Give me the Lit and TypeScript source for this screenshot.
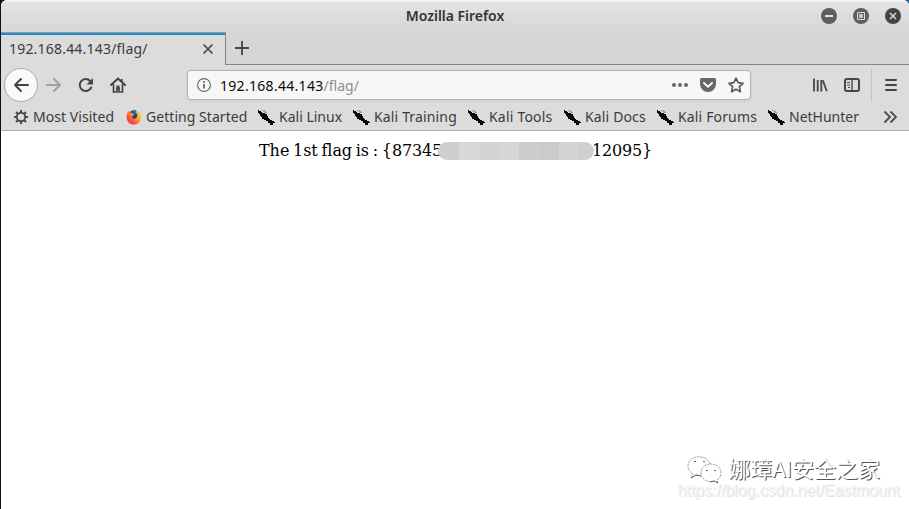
import { LitElement, html, css, svg } from "lit";
import { customElement } from "lit/decorators.js";

const kali = svg`<path d="M0 1H1V2H3V3H4V4H7V5H9V7H10V9H11V10H12V11H14V12H16V13H17V14H15V16H12V14H10V12H8V11H6V10H4V8H3V7H2V5H1V4H0Z" fill="#080808"/><path d="M4 1.2L8 4M6 1l3 3" stroke="#777" stroke-width=".7" fill="none"/>`;
const gear = svg`<g fill="none" stroke="#4a4a4a"><circle cx="8" cy="8" r="4.2" stroke-width="1.9"/><path d="M8 1v2.5M8 12.5V15M1 8h2.5M12.5 8H15M3 3l2 2M11 11l2 2M3 13l2-2M11 5l2-2" stroke-width="2"/></g>`;
const fox = svg`<defs><linearGradient id="f" x1="1" y1="0" x2="0" y2="1"><stop offset="0" stop-color="#fff044"/><stop offset=".35" stop-color="#ffb42a"/><stop offset=".65" stop-color="#ff5a2e"/><stop offset="1" stop-color="#ec1580"/></linearGradient></defs><circle cx="8" cy="7.6" r="6.3" fill="#143f94"/><path d="M7 1.2C9 0 11 2 11 4L8 5Z" fill="#1684dc"/><path d="M1.6 3.2 L2.5 1.8 L4 3.8 C5.5 3.3 6.2 3.6 6.6 4.3 L8.7 5.8 L6.4 6.9 C5.6 9.5 7.5 10.2 9 9.4 C11.8 9 11.9 5.8 10.2 3.8 L10.4 .9 C12 2 12.5 3.2 13 4.3 L13.7 3.4 C15.5 5.5 15.8 8 14.8 10.8 C12.8 16.6 5 17.4 1.8 12.4 C.1 9.5 .1 6 1.6 3.2Z" fill="url(#f)"/>`;

const bookmarks: [string, string][] = [
  ["Most Visited", "b0"], ["Getting Started", "b1"], ["Kali Linux", "b2"], ["Kali Training", "b3"],
  ["Kali Tools", "b4"], ["Kali Docs", "b5"], ["Kali Forums", "b6"], ["NetHunter", "b7"],
];

@customElement("app-root")
export class AppRoot extends LitElement {
  static styles = css`
    :host { display: block; width: 909px; height: 509px; overflow: hidden; background: linear-gradient(90deg, #061420 50%, #17639c 50%);
      font-family: "Noto Sans", sans-serif; font-size: 14px; color: #3b3b3b; }
    * { box-sizing: border-box; }
    svg { display: block; flex: none; }
    .window { position: relative; margin-left: 1px; width: 908px; height: 509px; border-radius: 6px 6px 0 0; overflow: hidden; background: #fff; display: flex; flex-direction: column; }
    .head { height: 65px; flex: none; background: linear-gradient(#f4f4f4 0, #f4f4f4 1px, #e3e3e3 2px, #d6d6d6 33px, #d6d6d6); display: flex; flex-direction: column; }
    .title { height: 32px; display: grid; grid-template-columns: 1fr auto 1fr; align-items: center; line-height: 32px; color: #333; }
    .title b { letter-spacing: -.03px; font-weight: 600; }
    .buttons { display: flex; gap: 16px; justify-content: flex-end; padding-right: 8px; }
    .tabs { height: 33px; display: flex; }
    .tab { width: 225px; height: 33px; border-top: 1px solid #999; border-right: 1px solid #858585; background: linear-gradient(#1c8fd0 2px, #dcdcdc 2px); display: flex; align-items: center; justify-content: space-between; padding: 0 11px 0 8px; }
    .t0 { letter-spacing: .2px; padding-bottom: 1px; }
    .rest { flex: 1; border-bottom: 1px solid #858585; padding: 8px 0 0 8px; }
    .nav { height: 40px; flex: none; background: #dcdcdc; display: flex; align-items: center; padding-left: 3px; }
    .back { width: 34px; height: 34px; border: 1px solid #aaa; border-radius: 50%; background: #fafafa; display: grid; place-items: center; }
    .tools { display: flex; gap: 16px; margin-left: 8px; width: 141px; }
    .url { width: 564px; height: 30px; border: 1px solid #b1b1b1; border-radius: 4px; background: #f7f7f7; box-shadow: 0 1px 3px #0001; display: flex; align-items: center; padding: 0 6px 0 8px; color: #0c0c0c; }
    .url span { margin-left: 8px; flex: 1; letter-spacing: .3px; }
    .url i { color: #8d8d8d; font-style: normal; letter-spacing: 0; }
    .acts { display: flex; gap: 12px; }
    .right { display: flex; gap: 16px; margin-left: 61px; }
    .sep { width: 1px; height: 34px; margin: 0 11px; background: #c4c4c4; }
    .marks { height: 26px; flex: none; background: #dcdcdc; border-bottom: 1px solid #acacac; display: flex; align-items: center; padding-left: 12px; }
    .marks > svg { margin-bottom: 1px; }
    .mark { display: flex; gap: 4px; align-items: center; white-space: nowrap; flex: none; line-height: 20px; }
    .mark span { padding-bottom: 2px; }
    .mark svg { margin-bottom: 1px; }
    .b0, .b1 { gap: 3px; letter-spacing: .05px; }
    .b0 { width: 113px; } .b1 { width: 132px; } .b2 { width: 95px; } .b3 { width: 115px; letter-spacing: .15px; }
    .b4 { width: 96px; letter-spacing: .2px; } .b5 { width: 93px; letter-spacing: .15px; } .b6 { width: 111px; letter-spacing: .15px; } .b7 { width: 115px; }
    .body { flex: 1; position: relative; padding: 10px 0 0 258px; display: flex; align-items: flex-start; font: 16px/19px "DejaVu Serif", serif; letter-spacing: -.18px; color: #000; white-space: pre; }
    .lead { letter-spacing: -.05px; word-spacing: -1.3px; }
    .hidden { width: 156px; height: 18px; margin: 1px -2px 0 -4px; border-radius: 9px; z-index: 1; background: linear-gradient(90deg, #cecece 21px, #d8d8d8 21px 41px, #d4d4d4 41px 61px, #d6d6d6 61px 81px, #cdcdcd 81px 101px, #cbcbcb 101px 121px, #d4d4d4 121px 141px, #cfcfcf 141px); }
    .brand { position: absolute; right: 29px; bottom: 31px; display: flex; align-items: center; gap: 6px; font: 22px/22px "Noto Sans CJK SC", sans-serif; letter-spacing: 0; color: #fff; text-shadow: 1px 1px 0 #555; }
    .brand svg { margin: -2px 0 -8px; }
    .link { position: absolute; right: 9px; bottom: 9px; font: 16px/18px "Liberation Sans", sans-serif; letter-spacing: -.06px; color: #f1f1f1; text-shadow: 1px 1px 0 #e4e4e4; }
  `;
  render() {
    return html`<div class="window">
      <div class="head">
        <div class="title"><span></span><b>Mozilla Firefox</b><div class="buttons">
          <svg width="16" height="16"><circle cx="8" cy="8" r="8" fill="#5e5e5e"/><path d="M4 8h8" stroke="#e2e2e2" stroke-width="2"/></svg>
          <svg width="16" height="16"><circle cx="8" cy="8" r="8" fill="#5e5e5e"/><path d="M4.5 4.5h7v7h-7z" fill="none" stroke="#ddd"/><path d="M6 6h4v4H6z" fill="#c4c4c4"/></svg>
          <svg width="16" height="16"><circle cx="8" cy="8" r="8" fill="#444"/><path d="M5 5l6 6M11 5l-6 6" stroke="#e2e2e2" stroke-width="1.4"/></svg>
        </div></div>
        <div class="tabs"><div class="tab"><span class="t0">192.168.44.143/flag/</span>
          <svg width="12" height="12"><path d="M1.5 1.5l9 9M10.5 1.5l-9 9" stroke="#484848" stroke-width="1.7"/></svg></div>
          <div class="rest"><svg width="16" height="16"><path d="M8 1v14M1 8h14" stroke="#454545" stroke-width="1.8"/></svg></div></div>
      </div>
      <div class="nav">
        <div class="back"><svg width="16" height="16"><path d="M15 8H2M8 2L2 8l6 6" fill="none" stroke="#454545" stroke-width="2" stroke-linecap="round" stroke-linejoin="round"/></svg></div>
        <div class="tools">
          <svg width="16" height="16"><path d="M1 8h13M8 2l6 6-6 6" fill="none" stroke="#a0a0a0" stroke-width="2" stroke-linecap="round" stroke-linejoin="round"/></svg>
          <svg width="16" height="16"><path d="M13.2 10.5A6 6 0 1 1 12.2 4" fill="none" stroke="#454545" stroke-width="2" stroke-linecap="round"/><path d="M15 1v6.5H8.5z" fill="#454545"/></svg>
          <svg width="16" height="16"><path d="M1 8l7-6.6L15 8" fill="none" stroke="#454545" stroke-width="2" stroke-linecap="round" stroke-linejoin="round"/><path d="M3.5 7v8H7v-4h2v4h3.5V7M11.8 2v3" fill="none" stroke="#454545" stroke-width="1.7"/><path d="M6.6 8.5h2.8V12H6.6z" fill="#454545"/></svg>
        </div>
        <div class="url"><svg width="16" height="16"><circle cx="8" cy="8" r="6.4" fill="none" stroke="#686868" stroke-width="1.1"/><path d="M8 7v4.5M8 4v1.8" stroke="#686868" stroke-width="1.8"/></svg>
          <span>192.168.44.143<i>/flag/</i></span>
          <div class="acts">
            <svg width="16" height="16" fill="#686868"><circle cx="2" cy="8" r="2"/><circle cx="8" cy="8" r="2"/><circle cx="14" cy="8" r="2"/></svg>
            <svg width="16" height="16"><path d="M1.7 1h12.6C15.3 1 16 1.7 16 2.7V7a8 8 0 0 1-16 0V2.7C0 1.7.7 1 1.7 1z" fill="#686868"/><path d="M4 6l4 3.7L12 6" fill="none" stroke="#f7f7f7" stroke-width="2" stroke-linecap="round" stroke-linejoin="round"/></svg>
            <svg width="16" height="16"><path d="M8 1.2l2.1 4.5 4.9.6-3.6 3.4.9 5L8 12.2l-4.3 2.5.9-5L1 6.3l4.9-.6z" fill="none" stroke="#606060" stroke-width="1.8" stroke-linejoin="round"/></svg>
          </div></div>
        <div class="right">
          <svg width="16" height="16"><path d="M2 1.5v13M5.7 3v11.5M9.3 3v11.5M10.8 3.2l4 11" fill="none" stroke="#454545" stroke-width="1.8"/></svg>
          <svg width="16" height="16"><rect x="1" y="2" width="14" height="12" rx="2" fill="none" stroke="#454545" stroke-width="2"/><path d="M8 2v12" stroke="#454545" stroke-width="1.4"/><path d="M3 5.5h3M3 8h3M4 10.5h2" stroke="#454545"/></svg>
        </div>
        <div class="sep"></div>
        <svg width="16" height="16"><path d="M3 3h10M3 8h10M3 13h10" stroke="#454545" stroke-width="2" stroke-linecap="round"/></svg>
      </div>
      <div class="marks">${bookmarks.map(([label, cls], i) => html`<div class="mark ${cls}">
          <svg width="17" height="16">${i === 0 ? gear : i === 1 ? fox : kali}</svg><span>${label}</span></div>`)}
        <svg width="14" height="14"><path d="M1.5 1.5L7 7l-5.5 5.5M7.5 1.5L13 7l-5.5 5.5" fill="none" stroke="#505050" stroke-width="1.9"/></svg>
      </div>
      <div class="body"><span class="lead">The 1st flag is : {</span><span>87345</span><div class="hidden"></div><span>12095}</span>
        <div class="brand"><svg width="36" height="32" fill="#fff" stroke="#999" stroke-width=".9"><g stroke-dasharray="2 .8"><path d="M24 10C22 0 2 0 2 12c0 4 2 6 5 8l-2 4 5-3 6 1"/><path d="M15 19c0-12 20-12 20 0 0 3-1 5-4 7l1 3-4-2c-7 2-13-2-13-8z"/></g><path d="M8 8l1-1 1 1M17 8l1-1 1 1M20 17l1-1 1 1M28 17l1-1 1 1" stroke="#555"/><path d="M5 24l5-3 5 1M24 28l4-1 4 2" stroke="#555" fill="none"/></svg><span>娜璋AI安全之家</span></div>
        <div class="link">https://blog.csdn.net/Eastmount</div>
      </div>
    </div>`;
  }
}
